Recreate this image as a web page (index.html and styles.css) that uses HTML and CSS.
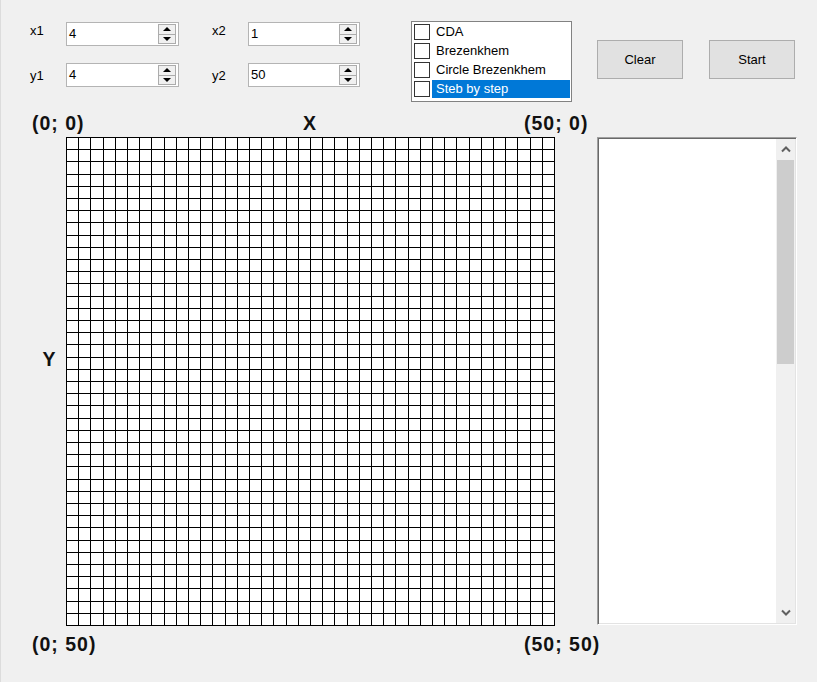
FILE: index.html
```html
<!DOCTYPE html>
<html>
<head>
<meta charset="utf-8">
<link rel="stylesheet" href="styles.css">
</head>
<body>
<div class="app">
  <div class="toolbar">
    <div class="fields">
      <span class="lbl lbl-top">x1</span>
      <div class="spin"><span class="val">4</span><div class="spin-btns"><span class="sb"><i class="up"></i></span><span class="sb"><i class="down"></i></span></div></div>
      <span></span>
      <span class="lbl lbl-top">x2</span>
      <div class="spin"><span class="val">1</span><div class="spin-btns"><span class="sb"><i class="up"></i></span><span class="sb"><i class="down"></i></span></div></div>
      <span class="lbl lbl-bottom">y1</span>
      <div class="spin"><span class="val">4</span><div class="spin-btns"><span class="sb"><i class="up"></i></span><span class="sb"><i class="down"></i></span></div></div>
      <span></span>
      <span class="lbl lbl-bottom">y2</span>
      <div class="spin"><span class="val">50</span><div class="spin-btns"><span class="sb"><i class="up"></i></span><span class="sb"><i class="down"></i></span></div></div>
    </div>
    <div class="checklist">
      <div class="item"><span class="box"></span><span class="text">CDA</span></div>
      <div class="item"><span class="box"></span><span class="text">Brezenkhem</span></div>
      <div class="item"><span class="box"></span><span class="text">Circle Brezenkhem</span></div>
      <div class="item selected"><span class="box"></span><span class="text">Steb by step</span></div>
    </div>
    <div class="buttons">
      <button class="btn">Clear</button>
      <button class="btn">Start</button>
    </div>
  </div>
  <div class="board">
    <div class="head">
      <span class="coord">(0; 0)</span>
      <span class="coord">X</span>
      <span class="coord">(50; 0)</span>
    </div>
    <span class="coord ylabel">Y</span>
    <svg class="grid" width="489" height="489" viewBox="0 0 489 489" shape-rendering="crispEdges">
      <rect x="0" y="0" width="489" height="489" fill="#fff"/>
      <path stroke="#000" stroke-width="1" fill="none" d="M0.5 0V489M12.5 0V489M24.5 0V489M37.5 0V489M49.5 0V489M61.5 0V489M73.5 0V489M85.5 0V489M98.5 0V489M110.5 0V489M122.5 0V489M134.5 0V489M146.5 0V489M159.5 0V489M171.5 0V489M183.5 0V489M195.5 0V489M207.5 0V489M220.5 0V489M232.5 0V489M244.5 0V489M256.5 0V489M268.5 0V489M281.5 0V489M293.5 0V489M305.5 0V489M317.5 0V489M329.5 0V489M342.5 0V489M354.5 0V489M366.5 0V489M378.5 0V489M390.5 0V489M403.5 0V489M415.5 0V489M427.5 0V489M439.5 0V489M451.5 0V489M464.5 0V489M476.5 0V489M488.5 0V489M0 0.5H489M0 12.5H489M0 24.5H489M0 37.5H489M0 49.5H489M0 61.5H489M0 73.5H489M0 85.5H489M0 98.5H489M0 110.5H489M0 122.5H489M0 134.5H489M0 146.5H489M0 159.5H489M0 171.5H489M0 183.5H489M0 195.5H489M0 207.5H489M0 220.5H489M0 232.5H489M0 244.5H489M0 256.5H489M0 268.5H489M0 281.5H489M0 293.5H489M0 305.5H489M0 317.5H489M0 329.5H489M0 342.5H489M0 354.5H489M0 366.5H489M0 378.5H489M0 390.5H489M0 403.5H489M0 415.5H489M0 427.5H489M0 439.5H489M0 451.5H489M0 464.5H489M0 476.5H489M0 488.5H489"/>
    </svg>
    <div class="textbox">
      <div class="content"></div>
      <div class="scrollbar">
        <div class="arrow"><svg width="10" height="7" viewBox="0 0 10 7"><path d="M1 5.5L5 1.5L9 5.5" stroke="#606060" stroke-width="2" fill="none"/></svg></div>
        <div class="track"><div class="thumb"></div></div>
        <div class="arrow"><svg width="10" height="7" viewBox="0 0 10 7"><path d="M1 1.5L5 5.5L9 1.5" stroke="#606060" stroke-width="2" fill="none"/></svg></div>
      </div>
    </div>
    <div class="foot">
      <span class="coord">(0; 50)</span>
      <span class="coord">(50; 50)</span>
    </div>
  </div>
</div>
</body>
</html>
```

FILE: styles.css
```css
html, body {
  margin: 0;
  padding: 0;
}
body {
  width: 817px;
  height: 682px;
  background: #f0f0f0;
  font-family: "Liberation Sans", Arial, sans-serif;
  font-size: 13px;
  color: #000;
  overflow: hidden;
}
.app {
  width: 817px;
  height: 682px;
  box-sizing: border-box;
  border-left: 1px solid #dcdcdc;
}
.toolbar {
  display: flex;
  align-items: flex-start;
  height: 110px;
  box-sizing: border-box;
  padding: 21px 0 0 29px;
}
.fields {
  display: grid;
  grid-template-columns: 36px 113px 33px 36px 112px;
  grid-auto-rows: 24px;
  row-gap: 17px;
  margin-top: 1px;
}
.lbl {
  line-height: 16px;
}
.lbl-top { padding-top: 1px; }
.lbl-bottom { padding-top: 5px; }
.spin {
  display: flex;
  justify-content: space-between;
  background: #fff;
  border: 1px solid #b4b4b4;
  box-sizing: border-box;
  height: 24px;
}
.val {
  padding: 3px 0 0 2px;
  line-height: 15px;
}
.spin-btns {
  display: flex;
  flex-direction: column;
  width: 18px;
  margin: 1px 2px 1px 0;
}
.sb {
  flex: 1;
  display: flex;
  align-items: center;
  justify-content: center;
  background: #f0f0f0;
  border: 1px solid #acacac;
  box-sizing: border-box;
}
.sb + .sb { border-top: none; }
.up, .down {
  width: 0;
  height: 0;
  border-left: 4px solid transparent;
  border-right: 4px solid transparent;
}
.up { border-bottom: 4px solid #000; }
.down { border-top: 4px solid #000; }

.checklist {
  margin-left: 51px;
  width: 161px;
  height: 81px;
  box-sizing: border-box;
  border: 1px solid #828282;
  background: #fff;
  display: flex;
  flex-direction: column;
}
.item {
  display: flex;
  align-items: center;
  height: 19px;
  padding-left: 2px;
}
.box {
  width: 16px;
  height: 16px;
  box-sizing: border-box;
  border: 1px solid #333;
  background: #fff;
  flex: none;
}
.text {
  margin-left: 2px;
  padding-left: 4px;
  line-height: 18px;
  flex: 1;
  margin-right: 1px;
}
.selected .text {
  background: #0078d7;
  color: #fff;
}
.buttons {
  display: flex;
  gap: 26px;
  margin-left: 25px;
  margin-top: 19px;
}
.btn {
  width: 86px;
  height: 39px;
  background: #e1e1e1;
  border: 1px solid #adadad;
  font-family: "Liberation Sans", Arial, sans-serif;
  font-size: 13px;
  color: #000;
  padding: 0;
}

.board {
  display: grid;
  grid-template-columns: 34px 489px 42px 200px;
  grid-template-rows: 27px 489px auto;
  padding-left: 31px;
}
.coord {
  font-weight: bold;
  font-size: 19.5px;
  line-height: 22px;
  letter-spacing: 1px;
  color: #111;
}
.head {
  grid-column: 1 / 5;
  display: grid;
  grid-template-columns: 271px 221px auto;
  padding-top: 2px;
}
.head .coord:nth-child(2) { letter-spacing: 0; }
.ylabel {
  grid-column: 1;
  grid-row: 2;
  align-self: start;
  justify-self: center;
  margin-top: 211px;
  letter-spacing: 0;
}
.grid {
  grid-column: 2;
  grid-row: 2;
  display: block;
}
.textbox {
  grid-column: 4;
  grid-row: 2;
  height: 488px;
  box-sizing: border-box;
  border-top: 1px solid #a0a0a0;
  border-left: 1px solid #a0a0a0;
  border-right: 1px solid #fff;
  border-bottom: 1px solid #fff;
  box-shadow: inset 1px 1px 0 #696969, inset -1px -1px 0 #e3e3e3;
  background: #fff;
  display: flex;
  padding: 1px;
}
.content {
  flex: 1;
}
.scrollbar {
  width: 19px;
  background: #f0f0f0;
  display: flex;
  flex-direction: column;
}
.arrow {
  height: 21px;
  display: flex;
  align-items: center;
  justify-content: center;
  flex: none;
}
.track {
  flex: 1;
  padding: 0 1px;
}
.thumb {
  height: 204px;
  background: #cdcdcd;
}
.foot {
  grid-column: 1 / 5;
  display: grid;
  grid-template-columns: 492px auto;
  padding-top: 7px;
}
```
